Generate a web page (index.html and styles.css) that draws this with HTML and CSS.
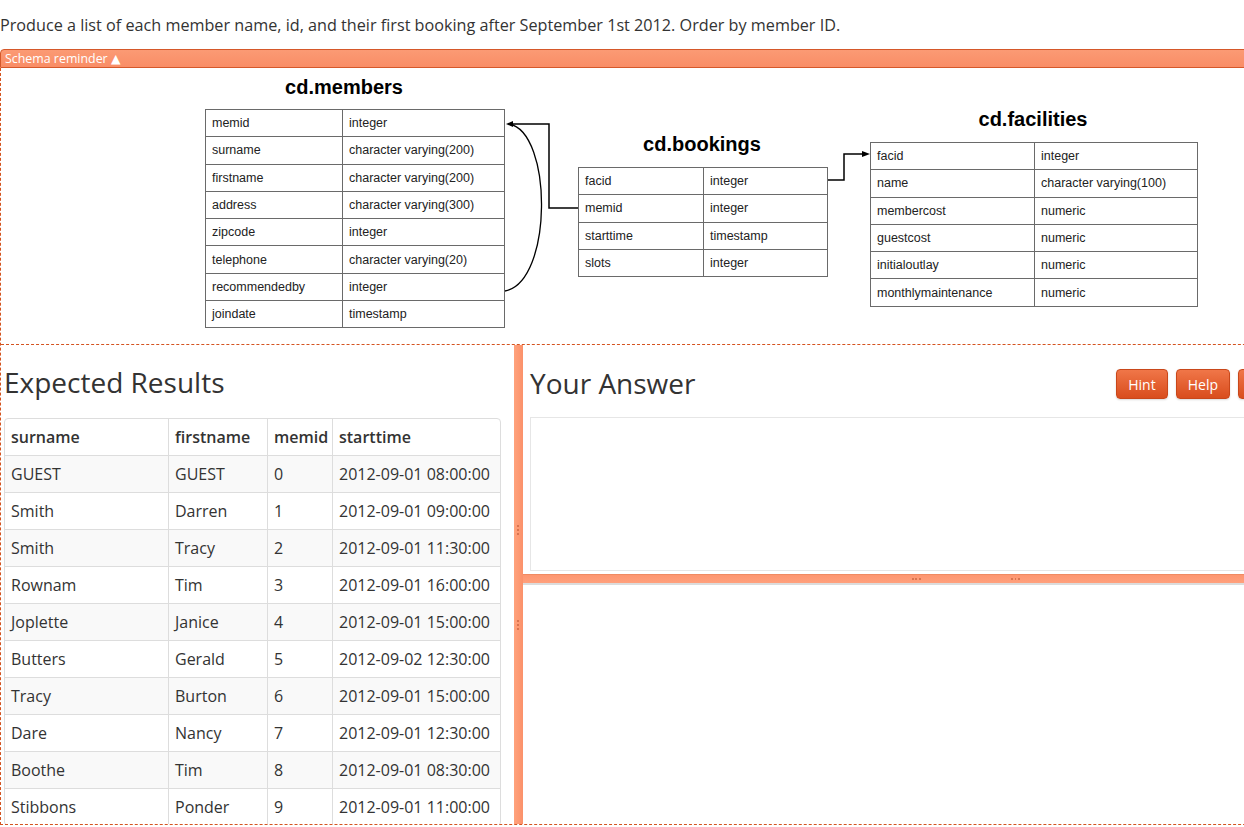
FILE: index.html
```html
<!DOCTYPE html>
<html lang="en">
<head>
<meta charset="utf-8">
<title>Exercise</title>
<link rel="stylesheet" href="styles.css">
</head>
<body>
<p class="question">Produce a list of each member name, id, and their first booking after September 1st 2012. Order by member ID.</p>
<div class="schema-toggle">Schema reminder ▲</div>
<div class="workspace">
  <div class="schema">
    <div class="diagram">
      <div class="entity-title t-members">cd.members</div>
      <table class="entity e-members">
        <tr><td class="c1">memid</td><td>integer</td></tr>
        <tr><td class="c1">surname</td><td>character varying(200)</td></tr>
        <tr><td class="c1">firstname</td><td>character varying(200)</td></tr>
        <tr><td class="c1">address</td><td>character varying(300)</td></tr>
        <tr><td class="c1">zipcode</td><td>integer</td></tr>
        <tr><td class="c1">telephone</td><td>character varying(20)</td></tr>
        <tr><td class="c1">recommendedby</td><td>integer</td></tr>
        <tr><td class="c1">joindate</td><td>timestamp</td></tr>
      </table>
      <div class="entity-title t-bookings">cd.bookings</div>
      <table class="entity e-bookings">
        <tr><td class="c1">facid</td><td>integer</td></tr>
        <tr><td class="c1">memid</td><td>integer</td></tr>
        <tr><td class="c1">starttime</td><td>timestamp</td></tr>
        <tr><td class="c1">slots</td><td>integer</td></tr>
      </table>
      <div class="entity-title t-facilities">cd.facilities</div>
      <table class="entity e-facilities">
        <tr><td class="c1">facid</td><td>integer</td></tr>
        <tr><td class="c1">name</td><td>character varying(100)</td></tr>
        <tr><td class="c1">membercost</td><td>numeric</td></tr>
        <tr><td class="c1">guestcost</td><td>numeric</td></tr>
        <tr><td class="c1">initialoutlay</td><td>numeric</td></tr>
        <tr><td class="c1">monthlymaintenance</td><td>numeric</td></tr>
      </table>
      <svg class="links" width="1243" height="276" viewBox="0 0 1243 276">
        <path d="M577 140 H548 V56 H510" fill="none" stroke="#000" stroke-width="1.5"/>
        <path d="M504 223 C552 214, 552 64, 508 56" fill="none" stroke="#000" stroke-width="1.3"/>
        <polygon points="505,56 512,53 512,59" fill="#000"/>
        <path d="M827 112 H843 V86 H862" fill="none" stroke="#000" stroke-width="1.5"/>
        <polygon points="869,86 861,83 861,89" fill="#000"/>
      </svg>
    </div>
  </div>
  <div class="panes">
    <section class="pane pane-left">
      <h2 class="pane-title">Expected Results</h2>
      <table class="results">
        <colgroup><col class="w-sur"><col class="w-first"><col class="w-id"><col class="w-time"></colgroup>
        <thead>
          <tr><th>surname</th><th>firstname</th><th>memid</th><th>starttime</th></tr>
        </thead>
        <tbody>
          <tr><td>GUEST</td><td>GUEST</td><td>0</td><td>2012-09-01 08:00:00</td></tr>
          <tr><td>Smith</td><td>Darren</td><td>1</td><td>2012-09-01 09:00:00</td></tr>
          <tr><td>Smith</td><td>Tracy</td><td>2</td><td>2012-09-01 11:30:00</td></tr>
          <tr><td>Rownam</td><td>Tim</td><td>3</td><td>2012-09-01 16:00:00</td></tr>
          <tr><td>Joplette</td><td>Janice</td><td>4</td><td>2012-09-01 15:00:00</td></tr>
          <tr><td>Butters</td><td>Gerald</td><td>5</td><td>2012-09-02 12:30:00</td></tr>
          <tr><td>Tracy</td><td>Burton</td><td>6</td><td>2012-09-01 15:00:00</td></tr>
          <tr><td>Dare</td><td>Nancy</td><td>7</td><td>2012-09-01 12:30:00</td></tr>
          <tr><td>Boothe</td><td>Tim</td><td>8</td><td>2012-09-01 08:30:00</td></tr>
          <tr><td>Stibbons</td><td>Ponder</td><td>9</td><td>2012-09-01 11:00:00</td></tr>
        </tbody>
      </table>
    </section>
    <div class="vsplit"><span class="grip grip-a"></span><span class="grip grip-b"></span></div>
    <section class="pane pane-right">
      <div class="answer-head">
        <h2 class="pane-title">Your Answer</h2>
        <div class="buttons">
          <button class="btn">Hint</button>
          <button class="btn">Help</button>
          <button class="btn btn-run">Run</button>
        </div>
      </div>
      <div class="answer-box"></div>
      <div class="hsplit"><span class="hgrip"></span><span class="hgrip"></span></div>
    </section>
  </div>
</div>
</body>
</html>
```
FILE: styles.css
```css
html, body {
  margin: 0;
  padding: 0;
  overflow: hidden;
  background: #fff;
}
body {
  width: 1244px;
  height: 827px;
  font-family: "Open Sans", "DejaVu Sans", sans-serif;
  color: #333;
}
.question {
  margin: 14px 0 13px 0;
  font-size: 16.2px;
  line-height: 22px;
  white-space: nowrap;
}
.schema-toggle {
  width: 1300px;
  height: 17px;
  line-height: 17px;
  box-sizing: content-box;
  background: linear-gradient(#fb9a74, #f98d66);
  border: 1px solid #d5582a;
  border-radius: 4px 0 0 0;
  color: #fff;
  font-size: 12.4px;
  padding-left: 4px;
  white-space: nowrap;
}
.workspace {
  width: 1300px;
  border-left: 1px dashed #d4531f;
  border-bottom: 1px dashed #d4531f;
}
.schema {
  height: 276px;
  border-bottom: 1px dashed #d4531f;
}
.diagram {
  position: relative;
  width: 1243px;
  height: 276px;
  font-family: "Liberation Sans", Arial, sans-serif;
  color: #222;
}
.entity-title {
  position: absolute;
  width: 200px;
  text-align: center;
  font-size: 20px;
  font-weight: bold;
  line-height: 23px;
  color: #000;
}
.t-members { left: 243px; top: 8px; }
.t-bookings { left: 601px; top: 65px; }
.t-facilities { left: 932px; top: 40px; }
.entity {
  position: absolute;
  border-collapse: collapse;
  table-layout: fixed;
  font-size: 12.5px;
}
.entity td {
  border: 1px solid #6a6a6a;
  height: 26.3px;
  padding: 0 6px;
  white-space: nowrap;
}
.e-members { left: 204px; top: 41px; width: 300px; }
.e-members .c1 { width: 124px; }
.e-bookings { left: 577px; top: 99px; width: 250px; }
.e-bookings .c1 { width: 112px; }
.e-facilities { left: 869px; top: 74px; width: 328px; }
.e-facilities .c1 { width: 151px; }
.links {
  position: absolute;
  left: 0;
  top: 0;
}
.panes {
  display: flex;
  height: 479px;
}
.pane {
  overflow: hidden;
  box-sizing: border-box;
  padding-top: 22px;
}
.pane-left {
  width: 513px;
  padding-left: 3px;
  flex: none;
}
.pane-title {
  margin: 0;
  font-size: 28px;
  line-height: 31px;
  font-weight: 400;
  color: #333;
}
.results {
  margin-top: 20px;
  width: 496px;
  table-layout: fixed;
  border-collapse: separate;
  border-spacing: 0;
  border: 1px solid #ddd;
  border-radius: 4px;
  font-size: 16px;
}
.w-sur { width: 163px; }
.w-first { width: 99px; }
.w-id { width: 65px; }
.w-time { width: 168px; }
.results th, .results td {
  height: 36px;
  padding: 0 6px;
  text-align: left;
  white-space: nowrap;
  border-left: 1px solid #ddd;
  border-top: 1px solid #ddd;
}
.results th:first-child, .results td:first-child {
  border-left: 0;
}
.results thead th {
  border-top: 0;
  font-weight: 600;
}
.results tbody tr:nth-child(odd) td {
  background: #f9f9f9;
}
.vsplit {
  flex: none;
  width: 9px;
  background: linear-gradient(90deg, #ffa27c, #fb916a);
  position: relative;
}
.grip {
  position: absolute;
  left: 3px;
  width: 2px;
  height: 10px;
  background: repeating-linear-gradient(#d9744f 0 2px, transparent 2px 4px);
}
.grip-a { top: 180px; }
.grip-b { top: 275px; }
.pane-right {
  width: 800px;
  flex: none;
}
.answer-head {
  display: flex;
  align-items: center;
  padding-left: 7px;
  padding-right: 9px;
}
.buttons {
  margin-left: auto;
  display: flex;
  gap: 8px;
  padding-top: 2px;
}
.btn {
  height: 30px;
  padding: 0 11px;
  border: 1px solid #c9471a;
  border-radius: 4px;
  background: linear-gradient(#f07648, #d94d1d);
  color: #fff;
  font-family: "Open Sans", "DejaVu Sans", sans-serif;
  font-size: 14px;
  box-shadow: 0 1px 2px rgba(0,0,0,0.15);
}
.btn-run { width: 76px; white-space: nowrap; }
.answer-box {
  margin: 18px 0 0 7px;
  height: 154px;
  box-sizing: border-box;
  border: 1px solid #e6e6e6;
}
.hsplit {
  margin-top: 3px;
  height: 8px;
  background: linear-gradient(#fd9670, #ffa07c);
  border-top: 1px solid #f08a62;
  border-bottom: 2px solid #dcdcdc;
  display: flex;
  justify-content: center;
  gap: 90px;
  padding-left: 86px;
  align-items: center;
}
.hgrip {
  width: 9px;
  height: 2px;
  background: repeating-linear-gradient(90deg, #d9744f 0 2px, transparent 2px 3.5px);
}
```
